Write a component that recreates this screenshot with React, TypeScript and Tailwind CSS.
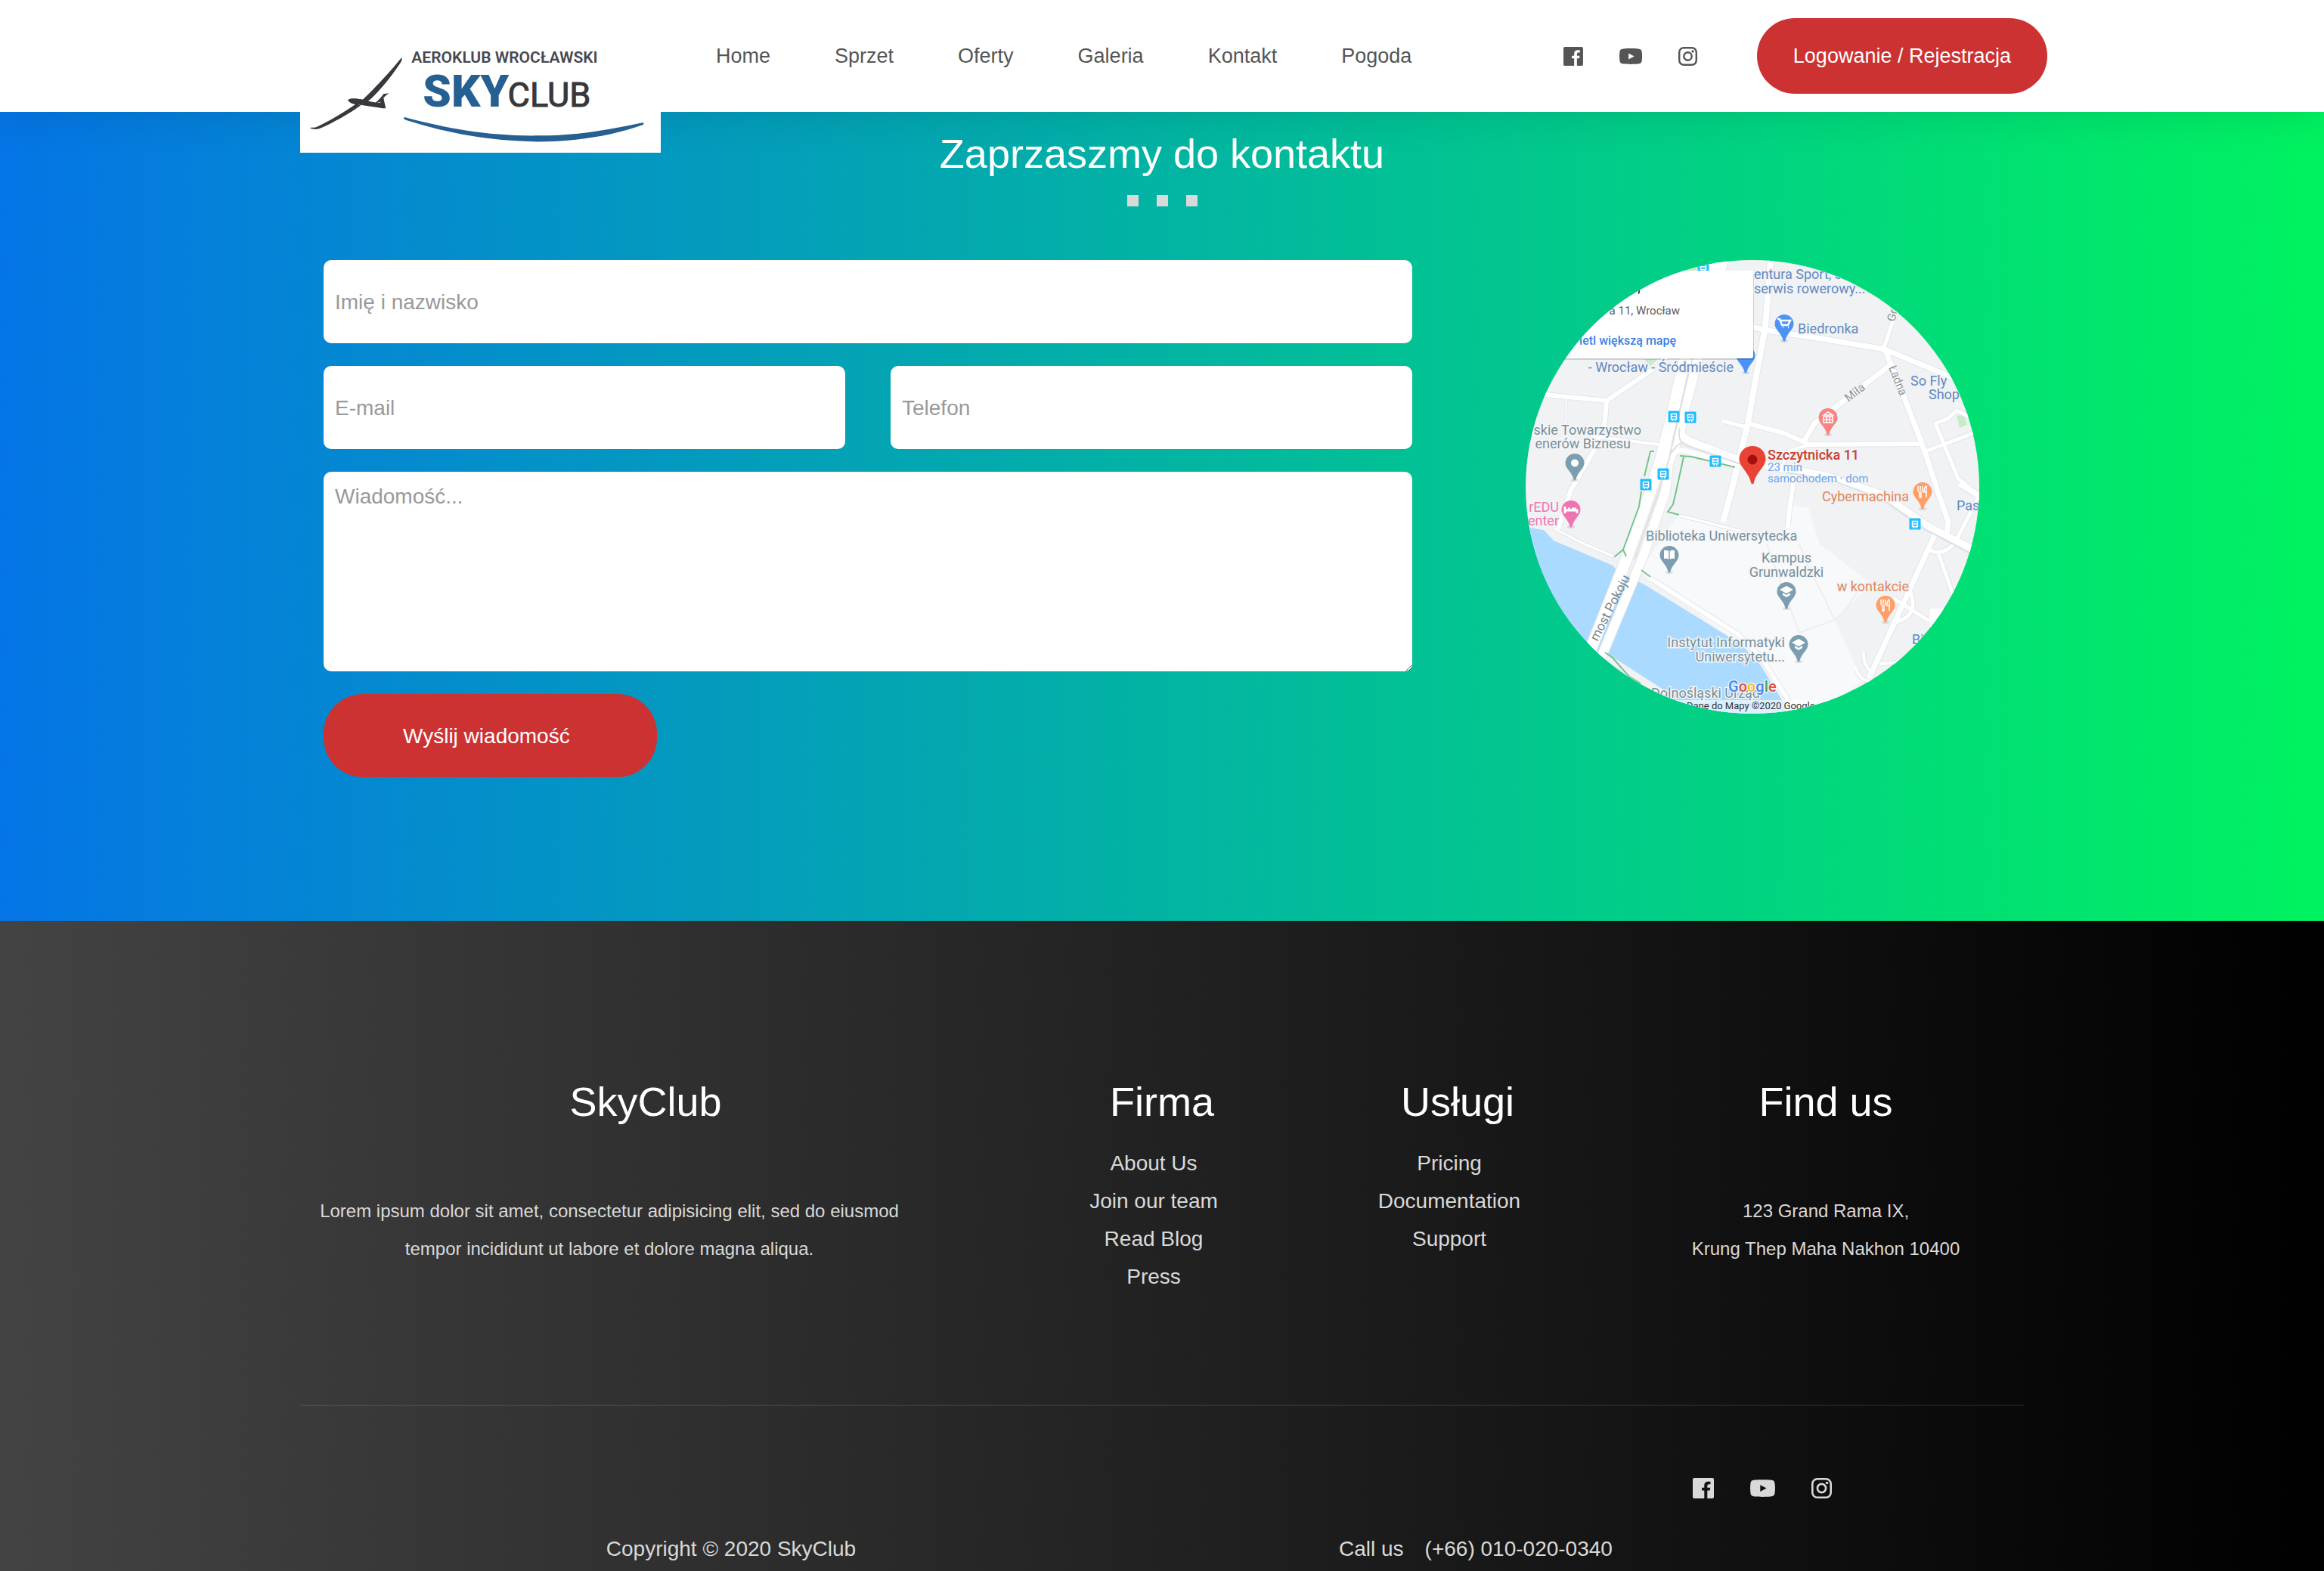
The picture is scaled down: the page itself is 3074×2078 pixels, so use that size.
import React from "react";

const navLinks = ["Home", "Sprzet", "Oferty", "Galeria", "Kontakt", "Pogoda"];
const companyLinks = ["About Us", "Join our team", "Read Blog", "Press"];
const serviceLinks = ["Pricing", "Documentation", "Support"];

function FacebookIcon({ className }: { className: string }) {
  return (
    <svg viewBox="0 0 28 27" className={className} fill="currentColor" aria-hidden="true">
      <path d="M2 0h24a2 2 0 0 1 2 2v23a2 2 0 0 1-2 2h-6.7V16.4h3.4l.5-3.7h-3.9v-2.3c0-1.5.7-2.2 2.2-2.2h2V4.7h-2.900c-3.600 0-5.300 2-5.300 5.100v2.900H12v3.700h3.300V27H2a2 2 0 0 1-2-2V2a2 2 0 0 1 2-2z" />
    </svg>
  );
}

function YoutubeIcon({ className }: { className: string }) {
  return (
    <svg viewBox="0 0 33 23" className={className} fill="currentColor" aria-hidden="true">
      <path
        fillRule="evenodd"
        d="M6 .5C12 0 21 0 27 .5c3.800.3 5.300 1.600 5.600 5.200.5 4 .5 7.600 0 11.600-.3 3.600-1.800 4.900-5.600 5.200-6 .5-15 .5-21 0-3.800-.3-5.300-1.600-5.600-5.200-.5-4-.5-7.600 0-11.600C.7 2.100 2.200.8 6 .5zM13.300 7.200v8.700l8.200-4.400z"
      />
    </svg>
  );
}

function InstagramIcon({ className }: { className: string }) {
  return (
    <svg viewBox="0 0 27 27" className={className} fill="none" stroke="currentColor" aria-hidden="true">
      <rect x="1.300" y="1.300" width="24.400" height="24.400" rx="6.500" strokeWidth="2.600" />
      <circle cx="13.500" cy="13.500" r="5.600" strokeWidth="2.600" />
      <circle cx="20.600" cy="6.500" r="1.800" fill="currentColor" stroke="none" />
    </svg>
  );
}

function Logo() {
  return (
    <svg viewBox="0 0 476 202" className="block w-full" role="img" aria-label="Aeroklub Wrocławski SkyClub">
      <rect width="476" height="202" fill="#fff" />
      <g fill="#37373c">
        <path d="M134 76c1 2 0 5-3 9-12 18-24 32-36 44l-7 6-8-1c14-13 31-31 43-45 5-6 8-10 11-13z" />
        <path d="M74 137l6 2c-15 11-36 23-55 31-4 1-8 1-12-1 2-1 5 0 8-1 17-8 36-19 53-31z" />
        <path d="M63 132c3-3 10-2 18-1 8 2 14 4 24 5l2-2-2 1-6 1c6-5 9-9 11-12l7-1-7 6 3 14-4 0c-13-2-24-4-33-5-6 0-12-3-13-6z" />
      </g>
      <text x="147" y="83" fontFamily="Roboto, sans-serif" fontWeight="600" fontSize="21" fill="#48484f">
        AEROKLUB WROCŁAWSKI
      </text>
      <text x="162" y="141" fontFamily="Roboto, sans-serif" fontWeight="900" fontSize="60" fill="#265f91">
        SKY
      </text>
      <text x="274" y="141" fontFamily="Roboto, sans-serif" fontWeight="400" fontSize="45" fill="#37373c" stroke="#37373c" strokeWidth="1">
        CLUB
      </text>
      <path
        d="M139 155c56 15 112 25 176 24 54 0 92-8 137-17 2 0 2 2 0 3-43 15-89 22-139 22-64-1-118-11-172-28-5-2-6-4-2-4z"
        fill="#265f91"
      />
    </svg>
  );
}

type PinProps = { x: number; y: number; color: string; children?: React.ReactNode };

/* Place marker: x is its middle, y the top of its head. */
function Pin({ x, y, color, children }: PinProps) {
  return (
    <g transform={`translate(${x} ${y})`}>
      <ellipse cx="0" cy="35" rx="5" ry="2" fill="#000" opacity="0.1" />
      <path d="M0 0c7 0 12.500 5.500 12.500 12.500C12.500 20 4 24 1.500 34c-.5 2-2.500 2-3 0C-4 24-12.500 20-12.500 12.500-12.500 5.500-7 0 0 0z" fill={color} />
      {children}
    </g>
  );
}

const forkKnife = (
  <path d="M-6 5v6a3 3 0 0 0 2 2v7h2v-7a3 3 0 0 0 2-2V5M-3 5v6M5 20V5c-3 1-3 5-3 8h3" fill="none" stroke="#fff" strokeWidth="1.500" />
);
const graduationCap = (
  <g fill="#fff">
    <path d="M0 5l9 5-9 5-9-5z" />
    <path d="M-5 14l5 3 5-3v3l-5 3-5-3z" />
  </g>
);

const stops = [
  [235, 9],
  [196, 207],
  [218, 208],
  [251, 266],
  [182, 283],
  [159, 297],
  [515, 349],
];

const roads: { d: string; w: number }[] = [
  { d: "M25 178L107 186L169 144", w: 6 },
  { d: "M107 186L105 213L92 249L59 306L44 353", w: 6 },
  { d: "M89 233L175 244", w: 4 },
  { d: "M53 184L54 200M54 208L50 222", w: 2 },
  { d: "M324 0L317 89L305 153L294 216L272 306L262 343", w: 8 },
  { d: "M302 89L319 93L392 104L475 118L559 153L590 165", w: 7 },
  { d: "M474 116L484 86L494 60", w: 5 },
  { d: "M475 118L484 140L509 203L529 256L545 306L559 346L557 363", w: 7 },
  { d: "M482 139L382 216L369 238", w: 7 },
  { d: "M294 216L342 229L375 244L522 243", w: 6 },
  { d: "M375 244L345 254L339 276", w: 4 },
  { d: "M262 213L292 221", w: 5 },
  { d: "M357 283L354 296L349 329L347 351", w: 6 },
  { d: "M529 253L595 228", w: 5 },
  { d: "M572 289L542 216L558 210L570 199L585 206", w: 5 },
  { d: "M572 289L589 303L602 312", w: 5 },
  { d: "M575 298L599 313L572 366", w: 5 },
  { d: "M540 366L455 551", w: 7 },
  { d: "M535 383Q549 394 569 373M547 391L564 439", w: 5 },
  { d: "M489 449L532 476M509 439Q520 470 492 478", w: 5 },
  { d: "M447 521L448 532L456 545M437 541Q442 556 456 557M470 534L490 532L510 520", w: 4 },
  { d: "M165 421L282 496L312 526L352 590", w: 6 },
  { d: "M40 356L72 373L119 393", w: 3 },
  { d: "M204 338L282 358", w: 3 },
];

const boulevards: { d: string; w: number }[] = [
  { d: "M250 0L207 146L192 213L179 263L165 306L132 399L86 515", w: 15 },
  { d: "M262 0L224 146L209 203L204 229L189 269L185 306L155 393L98 530", w: 12 },
  { d: "M206 232Q215 240 240 249L285 266L340 275L400 287L472 311L532 353L604 390", w: 11 },
  { d: "M188 262Q196 250 210 252L285 272", w: 7 },
];

const paths =
  "M170 253H165L157 286M153 306L150 326L129 383L117 393M129 383L133 392M204 259L219 260L277 274M209 260L199 306L195 323L188 333L203 337M153 410L165 419M105 519L115 526L137 551L152 560";

function CityMap() {
  return (
    <svg viewBox="0 0 600 600" className="block w-full rounded-full" role="img" aria-label="Mapa: Szczytnicka 11, Wrocław" fontFamily="Roboto, sans-serif" fontSize="18">
      <rect width="600" height="600" fill="#f1f2f4" />
      <path d="M202 338L345 375L347 324L374 328L389 376L460 430L442 443L409 476L445 556L380 610L345 590L310 526L160 420L152 409Z" fill="#f8f9fb" />
      <path d="M-20 350L5 354L24 357L37 371L115 404L124 413L147 424L160 431L265 496L288 511L310 535L339 582L345 600H215L182 568L140 541L105 519L60 560L-20 500Z" fill="#aadaff" />
      <path d="M319 376L362 493L409 476L425 460L439 439M362 376L372 400L409 476" fill="none" stroke="#eceef0" strokeWidth="2" />
      <path d="M157 131H175L165 140ZM210 14L226 9V14ZM570 206L580 204L584 218L574 222Z" fill="#c8ecc8" />

      <g fill="none" stroke="#e3e5e8" strokeLinejoin="round">
        {roads.map((r) => (
          <path key={r.d} d={r.d} strokeWidth={r.w + 2} />
        ))}
        {boulevards.map((r) => (
          <path key={r.d} d={r.d} strokeWidth={r.w + 2} />
        ))}
      </g>
      <g fill="none" stroke="#fff" strokeLinejoin="round" strokeLinecap="round">
        {roads.map((r) => (
          <path key={r.d} d={r.d} strokeWidth={r.w} />
        ))}
        {boulevards.map((r) => (
          <path key={r.d} d={r.d} strokeWidth={r.w} />
        ))}
      </g>
      <path d="M216 146L201 213L190 262L176 306L144 396M192 256Q200 244 206 242M204 222Q200 240 212 245L285 270M345 281L400 290L470 315L530 357L600 394" fill="none" stroke="#dcdfe3" strokeWidth="2" />
      <rect x="535" y="461" width="40" height="26" fill="#fff" />
      <path d={paths} fill="none" stroke="#74c48d" strokeWidth="2" />

      {stops.map(([x, y]) => (
        <g key={`${x}-${y}`} transform={`translate(${x} ${y})`}>
          <rect x="-7.500" y="-7.500" width="15" height="15" rx="1" fill="#20bdff" />
          <path d="M-3.500-3.500h7v7h-7zM-3.500 0h7M-2.500 5h1.500M1 5h1.500" fill="none" stroke="#fff" strokeWidth="1.500" />
        </g>
      ))}

      <Pin x={291} y={114} color="#4b93f7" />
      <rect x="-20" y="16" width="322" height="116" rx="3" fill="#000" opacity="0.15" />
      <rect x="-20" y="14" width="321" height="116" rx="3" fill="#fff" />
      <text x="148" y="42" fontSize="16" fontWeight="700" fill="#333">,</text>
      <text x="204" y="72" fontSize="15" textAnchor="end" fill="#5c5c5c">a 11, Wrocław</text>
      <text x="199" y="112" fontSize="16" fontWeight="500" textAnchor="end" fill="#3b82e6">ietl większą mapę</text>

      <g fill="#5f88c2" stroke="#f1f2f4" strokeWidth="3" paintOrder="stroke">
        <text x="275" y="148" textAnchor="end">- Wrocław - Śródmieście</text>
        <text x="302" y="25">entura Sport, s</text>
        <text x="302" y="44">serwis rowerowy...</text>
        <text x="360" y="97">Biedronka</text>
        <text x="509" y="166">So Fly</text>
        <text x="533" y="184">Shop</text>
        <text x="570" y="331">Pas</text>
        <text x="511" y="508">Bi</text>
      </g>
      <g fill="#78909c" stroke="#f5f6f8" strokeWidth="3" paintOrder="stroke">
        <text x="153" y="231" textAnchor="end">skie Towarzystwo</text>
        <text x="139" y="249" textAnchor="end">enerów Biznesu</text>
        <text x="159" y="371">Biblioteka Uniwersytecka</text>
        <text x="345" y="400" textAnchor="middle">Kampus</text>
        <text x="345" y="419" textAnchor="middle">Grunwaldzki</text>
        <text x="343" y="512" textAnchor="end">Instytut Informatyki</text>
        <text x="343" y="531" textAnchor="end">Uniwersytetu...</text>
        <text x="166" y="579">Dolnośląski Urząd</text>
      </g>
      <g fill="#e0865c" stroke="#f1f2f4" strokeWidth="3" paintOrder="stroke">
        <text x="507" y="319" textAnchor="end">Cybermachina</text>
        <text x="507" y="438" textAnchor="end">w kontakcie</text>
      </g>
      <g fill="#ee76b4">
        <text x="44" y="333" textAnchor="end">rEDU</text>
        <text x="44" y="351" textAnchor="end">enter</text>
      </g>
      <g fill="#8d9196" fontSize="15">
        <text transform="translate(95 505) rotate(-63)" fontSize="17" fill="#7c868e">most Pokoju</text>
        <text transform="translate(427 188) rotate(-38)">Miła</text>
        <text transform="translate(480 142) rotate(68)">Ładna</text>
        <text transform="translate(488 82) rotate(-76)">Gr</text>
      </g>
      <text x="320" y="264" fontWeight="500" fill="#c9402f" stroke="#f1f2f4" strokeWidth="3" paintOrder="stroke">Szczytnicka 11</text>
      <g fill="#6ea8f0" fontSize="15" stroke="#f1f2f4" strokeWidth="2" paintOrder="stroke">
        <text x="320" y="279">23 min</text>
        <text x="320" y="294">samochodem · dom</text>
      </g>

      <Pin x={342} y={72} color="#4b93f7">
        <path d="M-9 6h3l3 8h8l3-6h-12M-2 17h1M5 17h1" fill="none" stroke="#fff" strokeWidth="2.500" />
      </Pin>
      <Pin x={400} y={196} color="#f88383">
        <path d="M-6 9L0 5l6 4zM-6 11h12v8h-12zM-6 15h12M-2 11v8M2 11v8" fill="none" stroke="#fff" strokeWidth="1.500" />
      </Pin>
      <Pin x={65} y={256} color="#7b9eb0">
        <circle cy="12.500" r="5" fill="#fff" />
      </Pin>
      <Pin x={60} y={318} color="#ef72b3">
        <path d="M-8 8v9M8 17v-4h-16M-4 11h3M1 11h6" fill="none" stroke="#fff" strokeWidth="3" />
      </Pin>
      <Pin x={190} y={378} color="#7b9eb0">
        <path d="M-7 6Q-3 5-.7 7V18Q-3 16-7 17ZM7 6Q3 5 .7 7V18Q3 16 7 17Z" fill="#fff" />
      </Pin>
      <Pin x={345} y={426} color="#7b9eb0">{graduationCap}</Pin>
      <Pin x={361} y={496} color="#7b9eb0">{graduationCap}</Pin>
      <Pin x={525} y={294} color="#ff9e67">{forkKnife}</Pin>
      <Pin x={476} y={444} color="#ff9e67">{forkKnife}</Pin>

      <path d="M300 246c10 0 17.500 7.500 17.500 17 0 11-12 16-15.500 31-.5 3-3.500 3-4 0-3.500-15-15.500-20-15.500-31 0-9.500 7.500-17 17.500-17z" fill="#ea4335" />
      <circle cx="300" cy="264" r="6.500" fill="#a50e0e" />

      <rect y="582" width="600" height="18" fill="#fff" opacity="0.6" />
      <text x="268" y="571" fontSize="20" fontWeight="600" stroke="#fff" strokeWidth="2" paintOrder="stroke">
        <tspan fill="#4f86ec">G</tspan>
        <tspan fill="#e0524a">o</tspan>
        <tspan fill="#f5bd2c">o</tspan>
        <tspan fill="#4f86ec">g</tspan>
        <tspan fill="#3fa65a">l</tspan>
        <tspan fill="#e0524a">e</tspan>
      </text>
      <text x="213" y="594" fontSize="13" fill="#333">Dane do Mapy ©2020 Google</text>
    </svg>
  );
}

const fieldClass =
  "block w-full rounded-[10px] bg-white px-[15px] text-[28px] leading-[42px] text-[#444] placeholder:text-[#999] placeholder:opacity-100 outline-none";

function FooterLinks({ items }: { items: string[] }) {
  return (
    <ul className="mt-[25px] text-[28px] leading-[50px]">
      {items.map((item) => (
        <li key={item}>
          <a href="#">{item}</a>
        </li>
      ))}
    </ul>
  );
}

export default function App() {
  return (
    <div className="flex min-h-screen flex-col font-['Liberation_Sans',Arial,sans-serif]">
      <header className="relative z-10 bg-white shadow-[0_0_60px_rgba(0,0,0,0.12)]">
        <div className="mx-auto flex h-[148px] w-full max-w-[2280px] items-center">
          <a href="#" className="w-[477px] shrink-0 self-start">
            <Logo />
          </a>
          <nav className="ml-[73px] flex gap-[85px] text-[27px] text-[#555]">
            {navLinks.map((item) => (
              <a key={item} href="#">
                {item}
              </a>
            ))}
          </nav>
          <div className="-mr-[31px] ml-auto flex items-center">
            <div className="mr-[79px] flex items-center gap-12 text-[#555]">
              <a href="#" aria-label="Facebook">
                <FacebookIcon className="block h-[25px]" />
              </a>
              <a href="#" aria-label="YouTube">
                <YoutubeIcon className="block h-[21px]" />
              </a>
              <a href="#" aria-label="Instagram">
                <InstagramIcon className="block h-[25px]" />
              </a>
            </div>
            <button type="button" className="h-[100px] rounded-full bg-[#cd3232] px-12 text-[27px] text-white">
              Logowanie / Rejestracja
            </button>
          </div>
        </div>
      </header>

      <main className="bg-linear-to-r/srgb from-[#0575e6] to-[#00f260] pt-[23px] pb-[190px]">
        <h2 className="text-center text-[54px] leading-[64px] text-white">Zaprzaszmy do kontaktu</h2>
        <div className="mt-[23px] flex justify-center gap-6">
          <span className="size-[15px] bg-[#d9d9d9]" />
          <span className="size-[15px] bg-[#d9d9d9]" />
          <span className="size-[15px] bg-[#d9d9d9]" />
        </div>
        <div className="mx-auto mt-[71px] grid w-full max-w-[2280px] grid-cols-[1440fr_600fr] items-start gap-[150px] pr-[59px] pl-[31px]">
          <form className="flex flex-col items-start gap-[30px]" onSubmit={(e) => e.preventDefault()}>
            <input type="text" aria-label="Imię i nazwisko" placeholder="Imię i nazwisko" className={`${fieldClass} h-[110px] pt-[2px]`} />
            <div className="grid w-full grid-cols-2 gap-[60px]">
              <input type="email" aria-label="E-mail" placeholder="E-mail" className={`${fieldClass} h-[110px] pt-[2px]`} />
              <input type="tel" aria-label="Telefon" placeholder="Telefon" className={`${fieldClass} h-[110px] pt-[2px]`} />
            </div>
            <textarea aria-label="Wiadomość" placeholder="Wiadomość..." className={`${fieldClass} h-[264px] pt-3`} />
            <button type="submit" className="h-[110px] rounded-[52px] bg-[#cd3232] pt-[2px] pr-[115px] pl-[105px] text-[28px] text-white">
              Wyślij wiadomość
            </button>
          </form>
          <CityMap />
        </div>
      </main>

      <footer className="flex-1 bg-linear-to-r/srgb from-[#434343] to-black pt-[207px] text-[#d9d9d9]">
        <div className="mx-auto w-full max-w-[2280px]">
          <div className="grid grid-cols-[950fr_380fr_380fr_570fr] text-center">
            <section>
              <h3 className="pr-9 text-[54px] leading-[64px] text-white">SkyClub</h3>
              <p className="mt-[88px] pr-[132px] text-2xl leading-[50px]">
                Lorem ipsum dolor sit amet, consectetur adipisicing elit, sed do eiusmod tempor incididunt ut labore et dolore magna aliqua.
              </p>
            </section>
            <section className="pr-[22px]">
              <h3 className="pl-[22px] text-[54px] leading-[64px] text-white">Firma</h3>
              <FooterLinks items={companyLinks} />
            </section>
            <section>
              <h3 className="pl-[22px] text-[54px] leading-[64px] text-white">Usługi</h3>
              <FooterLinks items={serviceLinks} />
            </section>
            <section className="pl-[46px]">
              <h3 className="text-[54px] leading-[64px] text-white">Find us</h3>
              <p className="mt-[88px] text-2xl leading-[50px]">
                123 Grand Rama IX,
                <br />
                Krung Thep Maha Nakhon 10400
              </p>
            </section>
          </div>
          <hr className="mt-[144px] border-t-2 border-white/8" />
          <div className="mt-[95px] flex items-center justify-end gap-12 pr-[254px]">
            <a href="#" aria-label="Facebook">
              <FacebookIcon className="block h-[27px]" />
            </a>
            <a href="#" aria-label="YouTube">
              <YoutubeIcon className="block h-[23px]" />
            </a>
            <a href="#" aria-label="Instagram">
              <InstagramIcon className="block h-[27px]" />
            </a>
          </div>
          <div className="mt-[42px] grid grid-cols-2 text-[28px] leading-[50px]">
            <p className="text-center">Copyright © 2020 SkyClub</p>
            <p className="flex gap-7 pl-[234px]">
              <span>Call us</span>
              <a href="tel:+660100200340">(+66) 010-020-0340</a>
            </p>
          </div>
        </div>
      </footer>
    </div>
  );
}
